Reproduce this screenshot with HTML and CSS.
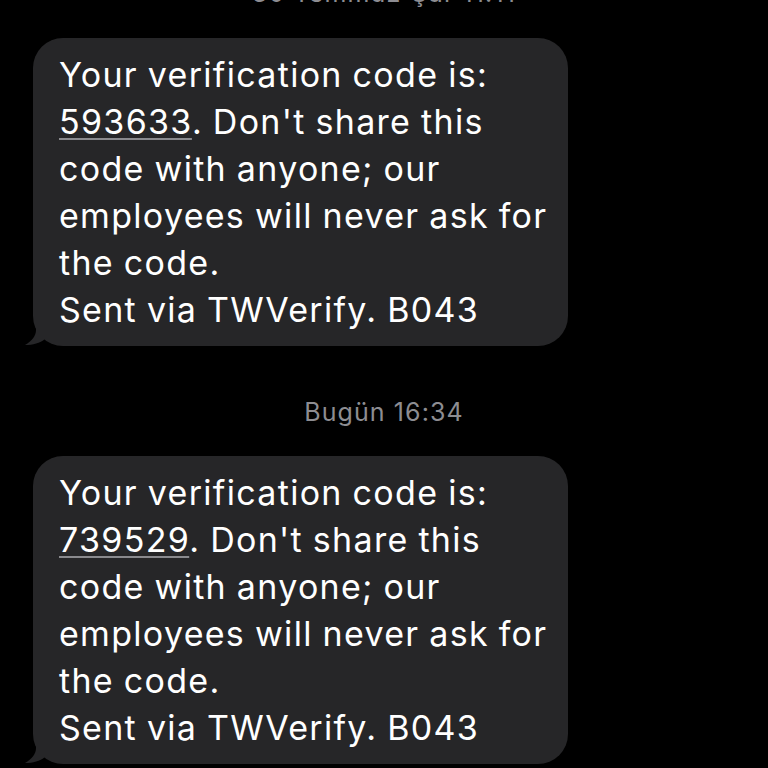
FILE: index.html
```html
<!DOCTYPE html>
<html lang="tr">
<head>
    <meta charset="UTF-8">
    <meta name="viewport" content="width=device-width, initial-scale=1.0">
    <title>Mesajlar</title>
    <link rel="stylesheet" href="styles.css">
</head>
<body>
    <div class="thread">
        <div class="stamp stamp-top">30 Temmuz Çar 11:11</div>

        <div class="bubble">
            <p class="bubble-text">Your verification code is: <span class="code">593633</span>. Don't share this code with anyone; our employees will never ask for the code.<br>Sent via TWVerify. B043</p>
            <svg class="tail" width="30" height="24" viewBox="0 0 30 24">
                <path d="M12 0 L12 8 C12 14 8 19 1 23 C9 23 16 21 21 17 L30 17 L30 0 Z" fill="#262628"/>
            </svg>
        </div>

        <div class="stamp">Bugün 16:34</div>

        <div class="bubble">
            <p class="bubble-text">Your verification code is: <span class="code">739529</span>. Don't share this code with anyone; our employees will never ask for the code.<br>Sent via TWVerify. B043</p>
            <svg class="tail" width="30" height="24" viewBox="0 0 30 24">
                <path d="M12 0 L12 8 C12 14 8 19 1 23 C9 23 16 21 21 17 L30 17 L30 0 Z" fill="#262628"/>
            </svg>
        </div>
    </div>
</body>
</html>
```
FILE: styles.css
```css
* {
    margin: 0;
    padding: 0;
    box-sizing: border-box;
}

body {
    background: #000;
    font-family: Inter, "Noto Sans", sans-serif;
    color: #fff;
    width: 768px;
    height: 768px;
    overflow: hidden;
}

.thread {
    display: flex;
    flex-direction: column;
    padding: 0 0 0 33px;
}

.stamp {
    align-self: center;
    margin-left: -33px;
    color: #8d8d92;
    font-size: 25px;
    letter-spacing: 1.1px;
    line-height: 28px;
    margin-top: 52px;
    margin-bottom: 30px;
}

.stamp-top {
    margin-top: -21px;
    margin-bottom: 31px;
}

.bubble {
    position: relative;
    width: 535px;
    background: #262628;
    border-radius: 30px;
    padding: 13px 12px 13px 26px;
}

.bubble-text {
    font-size: 34px;
    letter-spacing: 1.3px;
    word-spacing: -1px;
    line-height: 47px;
}

.code {
    text-decoration: underline;
    text-decoration-color: #8a8a8e;
    text-decoration-thickness: 2px;
    text-underline-offset: 4px;
}

.tail {
    position: absolute;
    left: -9px;
    bottom: 0;
    display: block;
}
```
